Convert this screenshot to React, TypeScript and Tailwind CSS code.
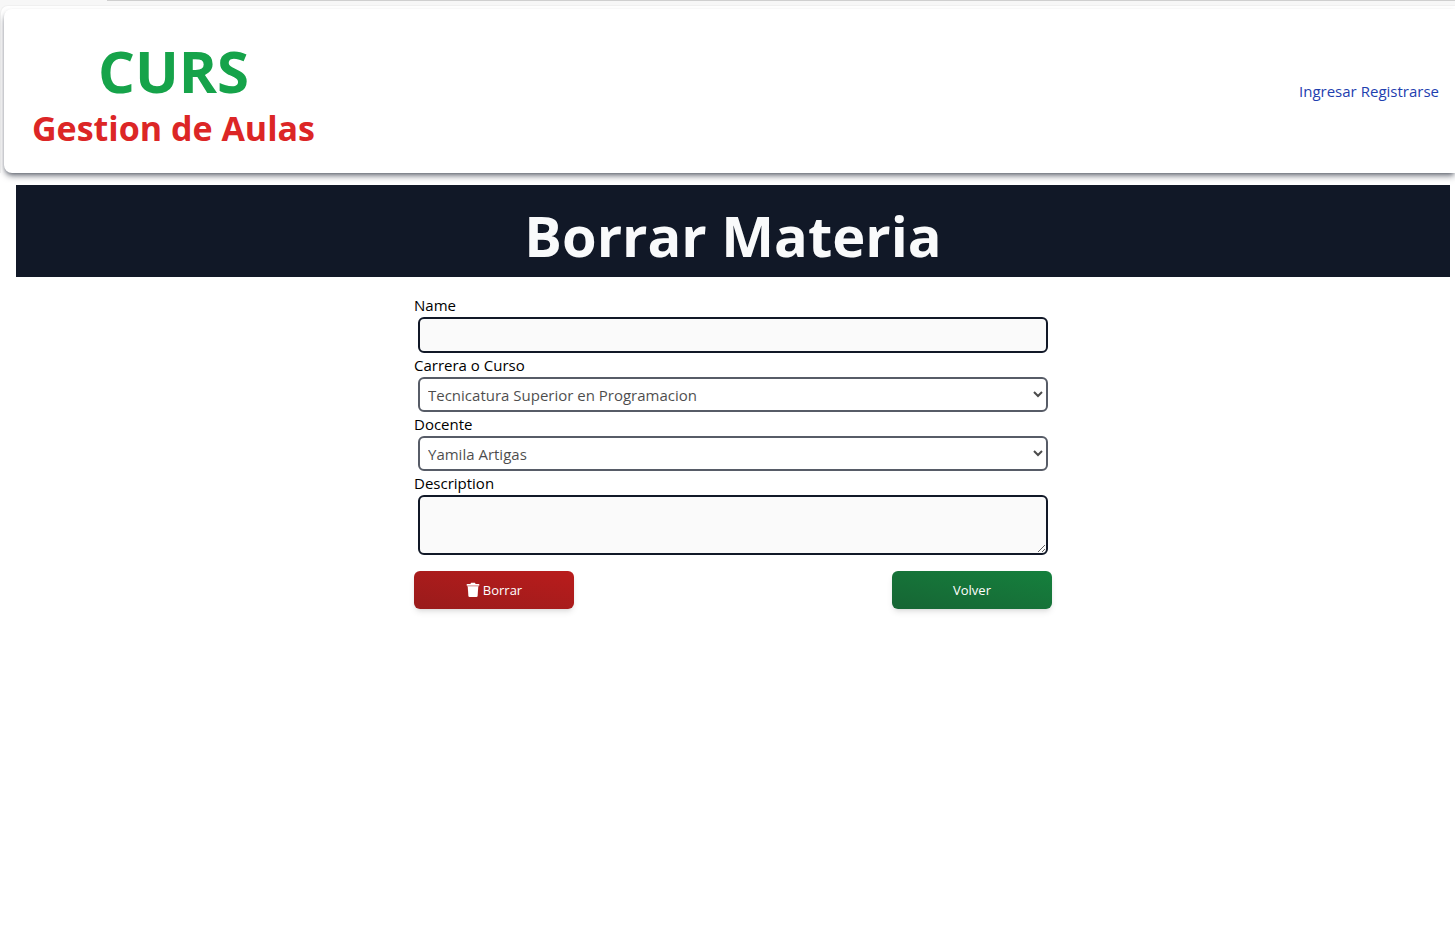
import React, { useState } from "react";

const fieldBase = "mx-1 block rounded-md border-2 border-[#111827] px-2";
const selectBase =
  "mx-1 h-[35px] flex-1 rounded-md border-2 border-[#111827] bg-white pl-1 text-black opacity-70";
const labelBase = "block h-6 leading-6";
const buttonBase =
  "flex h-[38px] w-40 items-center justify-center gap-[3px] rounded-md bg-linear-to-tr pt-0.5 font-medium text-white shadow-md";

function TrashIcon() {
  return (
    <svg width="14" height="16" viewBox="0 0 14 16" className="-mt-0.5" aria-hidden="true">
      <path d="M4.6 1.6Q4.6 0.8 5.4 0.8h3.2q0.8 0 0.8 0.8v0.4h3.2q0.8 0 0.8 0.8v0.6H0.6v-0.6q0-0.8 0.8-0.8h3.2z" fill="#fff" />
      <path d="M1 3.4h12v0.9H1z" fill="#f3cfcf" />
      <path d="M1.7 4.2h10.6l-0.7 9.7q-0.1 1.1-1.2 1.1H3.6q-1.1 0-1.2-1.1z" fill="#fff" />
    </svg>
  );
}

export default function App() {
  const [name, setName] = useState("");
  const [description, setDescription] = useState("");

  return (
    <div className="min-h-screen overflow-x-hidden bg-white font-['Open_Sans','Noto_Sans',sans-serif] text-[15px] text-black">
      <div className="bg-[#f7f7f7]">
        <div className="ml-[107px] h-px bg-[#cfcfcf]" />
        <div className="h-1" />
        <div className="rounded-tl-lg border-t border-l border-[#f0f0f0] bg-white pt-[3px] pl-[3px]">
          <header className="flex h-[164px] items-center justify-between rounded-l-lg bg-white pr-4 pl-7 shadow-[0_4px_6px_-1px_#11182780,0_2px_4px_-2px_#11182780]">
            <div className="pt-[11px] text-center font-bold">
              <h1 className="text-[58px] leading-[60px] text-[#16a34a]">CURS</h1>
              <h2 className="mt-[3px] text-[34px] leading-[48px] text-[#dc2626]">Gestion de Aulas</h2>
            </div>
            <nav className="flex gap-1 text-[#1e40af]">
              <a href="#ingresar">Ingresar</a>
              <a href="#registrarse">Registrarse</a>
            </nav>
          </header>
        </div>
      </div>

      <main className="pt-3 pr-[5px] pl-4">
        <h2 className="bg-[#111827] pt-5 pb-3 text-center text-[56px] leading-[60px] font-bold text-[#f9fafb]">
          Borrar Materia
        </h2>

        <form className="mx-auto max-w-[638px] pt-4" onSubmit={(e) => e.preventDefault()}>
          <label className={labelBase} htmlFor="name">Name</label>
          <div className="flex">
            <input
              id="name"
              className={`${fieldBase} h-9 flex-1 bg-[#fafafa]`}
              value={name}
              onChange={(e) => setName(e.target.value)}
            />
          </div>
          <label className={labelBase} htmlFor="carrera">Carrera o Curso</label>
          <div className="flex">
            <select id="carrera" disabled className={selectBase}>
              <option>Tecnicatura Superior en Programacion</option>
            </select>
          </div>
          <label className={labelBase} htmlFor="docente">Docente</label>
          <div className="flex">
            <select id="docente" disabled className={selectBase}>
              <option>Yamila Artigas</option>
            </select>
          </div>
          <label className={labelBase} htmlFor="description">Description</label>
          <div className="flex">
            <textarea
              id="description"
              className={`${fieldBase} h-[60px] flex-1 bg-[#fafafa] py-1`}
              value={description}
              onChange={(e) => setDescription(e.target.value)}
            />
          </div>
          <div className="flex justify-between pt-4 text-[13px]">
            <button type="submit" className={`${buttonBase} from-[#991b1b] to-[#b91c1c]`}>
              <TrashIcon />
              Borrar
            </button>
            <button type="button" className={`${buttonBase} from-[#166534] to-[#15803d]`}>
              Volver
            </button>
          </div>
        </form>
      </main>
    </div>
  );
}
